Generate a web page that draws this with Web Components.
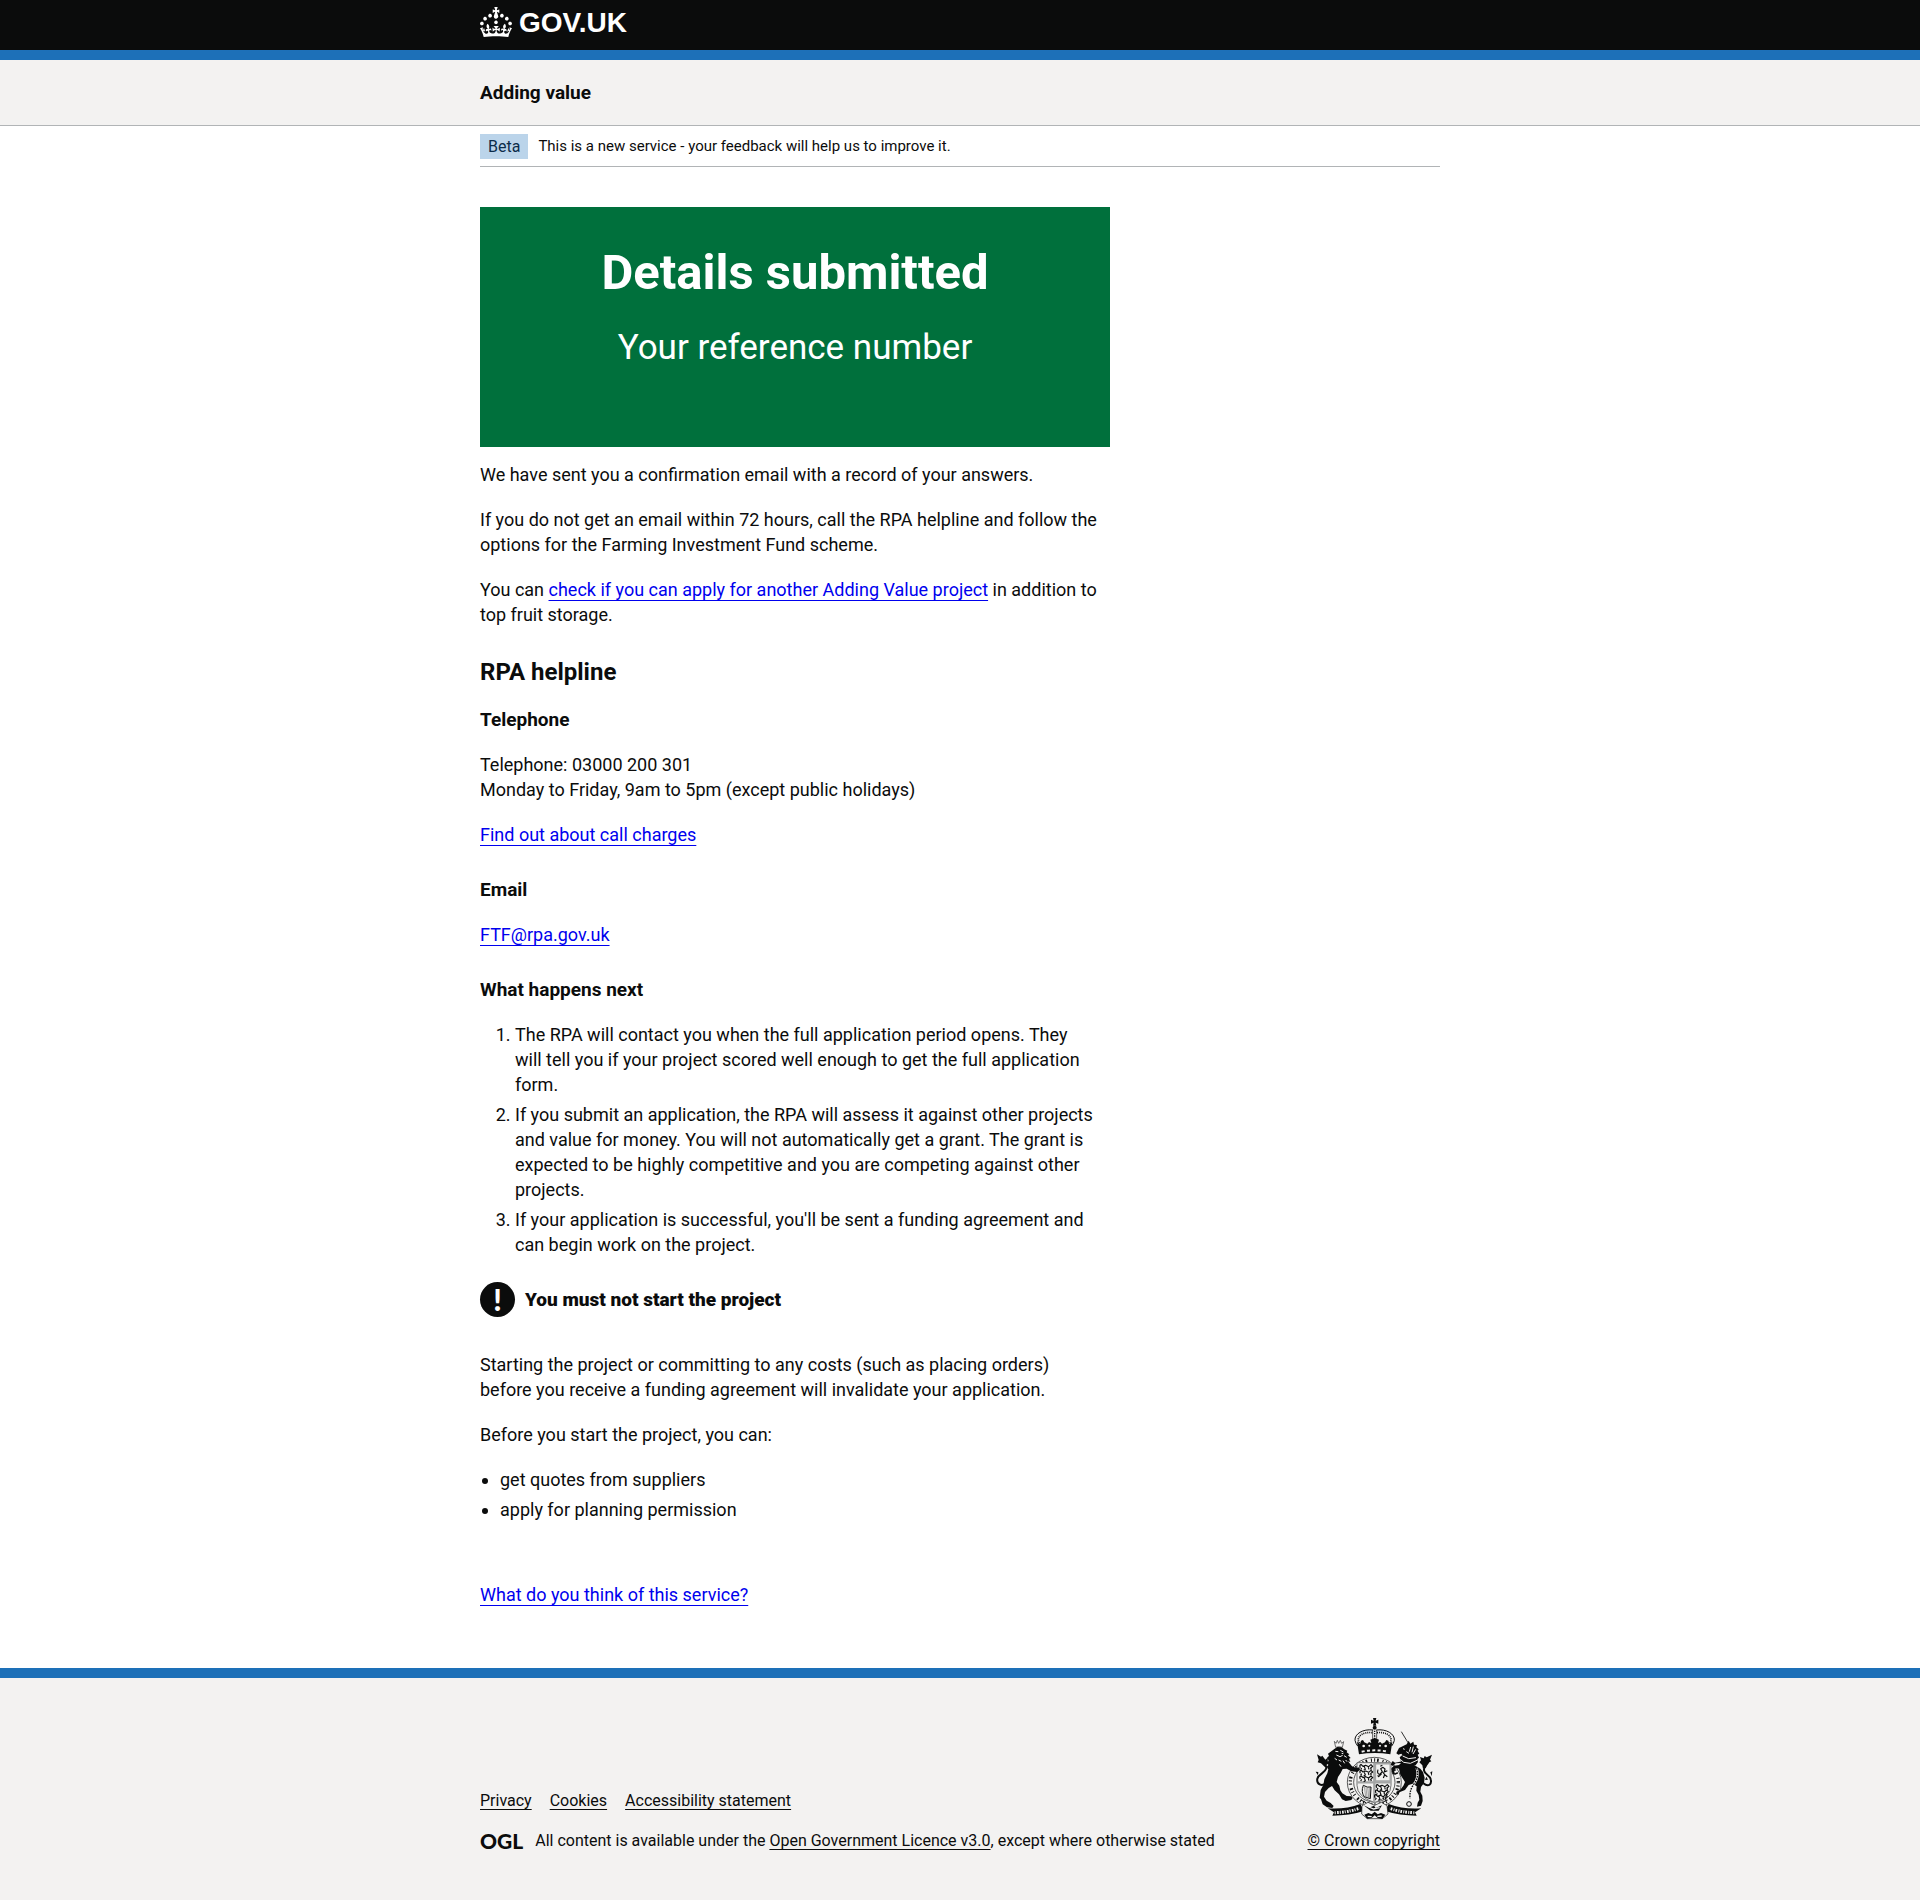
<!DOCTYPE html>
<html lang="en">
<head>
<meta charset="utf-8">
<meta name="viewport" content="width=device-width, initial-scale=1">
<title>Details submitted - Adding value</title>
<style>
  html { background: #f3f2f1; }
  body {
    margin: 0;
    background: #fff;
    color: #0b0c0c;
    font: 400 18px/25px Roboto, "Liberation Sans", sans-serif;
    --brand: #1d70b8;
    --black: #0b0c0c;
    --grey: #f3f2f1;
    --border: #b1b4b6;
    --page-width: 960px;
  }
</style>
</head>
<body>
<site-header></site-header>
<service-bar>Adding value</service-bar>
<phase-banner tag="Beta">This is a new service - your feedback will help us to improve it.</phase-banner>
<page-content></page-content>
<site-footer></site-footer>

<script>
const BASE = `
  :host { display: block; }
  *, *::before { box-sizing: border-box; }
  .wrap { max-width: var(--page-width); margin: 0 auto; }
`;

function define(name, styles, markup) {
  const template = document.createElement('template');
  template.innerHTML = `<style>${BASE}${styles}</style>${markup}`;
  customElements.define(name, class extends HTMLElement {
    constructor() {
      super();
      this.attachShadow({ mode: 'open' }).append(template.content.cloneNode(true));
    }
    connectedCallback() {
      for (const node of this.shadowRoot.querySelectorAll('[data-text]')) {
        node.textContent = this.getAttribute(node.dataset.text) || '';
      }
      const link = this.shadowRoot.querySelector('a[data-href]');
      if (link) link.href = this.getAttribute('href') || '#';
    }
  });
}

define('text-link', `
  :host { display: inline; }
  a { color: #0000ee; text-decoration: underline; text-decoration-thickness: 1px; text-underline-offset: 4px; text-decoration-skip-ink: none; }
  :host([muted]) a { color: var(--black); text-underline-offset: 3px; text-decoration-skip-ink: auto; }
`, `<a data-href><slot></slot></a>`);

define('crown-icon', `
  :host { display: block; width: 32px; height: 30px; }
  svg { display: block; fill: currentColor; }
`, `<svg width="32" height="30" viewBox="0 0 32 30" aria-hidden="true"><path d="M22.6 10.4c-1 .4-2-.1-2.4-1-.4-.9.1-2 1-2.4.9-.4 2 .1 2.4 1s-.1 2-1 2.4m-5.9 6.7c-.9.4-2-.1-2.4-1-.4-.9.1-2 1-2.4.9-.4 2 .1 2.4 1s-.1 2-1 2.4m10.8-3.7c-1 .4-2-.1-2.4-1-.4-.9.1-2 1-2.4.9-.4 2 .1 2.4 1s0 2-1 2.4m3.3 4.8c-1 .4-2-.1-2.4-1-.4-.9.1-2 1-2.4.9-.4 2 .1 2.4 1s-.1 2-1 2.4M17 4.7l2.3 1.2V2.5l-2.3.7-.2-.2.9-3h-3.4l.9 3-.2.2c-.1.1-2.3-.7-2.3-.7v3.4L15 4.7c.1.1.1.2.2.2l-1.3 4c-.1.2-.1.4-.1.6 0 1.1.8 2 1.9 2.2h.7c1-.2 1.9-1.1 1.9-2.1 0-.2 0-.4-.1-.6l-1.3-4c-.1-.2 0-.2.1-.3m-7.6 5.7c.9.4 2-.1 2.4-1 .4-.9-.1-2-1-2.4-.9-.4-2 .1-2.4 1s0 2 1 2.4m-5 3c.9.4 2-.1 2.4-1 .4-.9-.1-2-1-2.4-.9-.4-2 .1-2.4 1s.1 2 1 2.4m-3.2 4.8c.9.4 2-.1 2.4-1 .4-.9-.1-2-1-2.4-.9-.4-2 .1-2.4 1s0 2 1 2.4m14.8 11c4.4 0 8.6.3 12.3.8 1.1-4.5 2.4-7 3.7-8.8l-2.5-.9c.2 1.3.3 1.9 0 2.7-.4-.4-.8-1.1-1.1-2.3l-1.2 4c.7-.5 1.3-.8 2-.9-1.1 2.5-2.6 3.1-3.5 3-1.1-.2-1.7-1.2-1.5-2.1.3-1.2 1.5-1.5 2.1-.1 1.1-2.3-.8-3-2-2.3 1.9-1.9 2.1-3.5.6-5.6-2.1 1.6-2.1 3.2-1.2 5.5-1.2-1.4-3.2-.6-2.5 1.6.9-1.4 2.1-.5 1.9.8-.2 1.1-1.7 2.1-3.5 1.9-2.7-.2-2.9-2.1-2.9-3.6.7-.1 1.9.5 2.9 1.9l.4-4.3c-1.1 1.1-2.1 1.4-3.2 1.4.4-1.2 2.1-3 2.1-3h-5.4s1.7 1.9 2.1 3c-1.1 0-2.1-.2-3.2-1.4l.4 4.3c1-1.4 2.2-2 2.9-1.9-.1 1.5-.2 3.4-2.9 3.6-1.9.2-3.4-.8-3.5-1.9-.2-1.3 1-2.2 1.9-.8.7-2.3-1.2-3-2.5-1.6.9-2.2.9-3.9-1.2-5.5-1.5 2-1.3 3.7.6 5.6-1.2-.7-3.1 0-2 2.3.6-1.4 1.8-1.1 2.1.1.2.9-.3 1.9-1.5 2.1-.9.2-2.4-.5-3.5-3 .6 0 1.2.3 2 .9l-1.2-4c-.3 1.1-.7 1.9-1.1 2.3-.3-.8-.2-1.4 0-2.7l-2.9.9C1.3 23 2.6 25.5 3.7 30c3.7-.5 7.9-.8 12.3-.8"/></svg>`);

define('royal-arms', `
  :host { display: block; width: 125px; height: 102px; }
  svg { display: block; }
`, `<svg width="125" height="102" viewBox="66 54 375 306" fill="#0b0c0c" aria-hidden="true">
  <!-- crown -->
  <path d="M252 54h10l-2 8 8-3v12l-8-3 2 9h-10l2-9-8 3V59l8 3z"/>
  <circle cx="257" cy="83" r="6"/>
  <path d="M252 90C222 86 196 102 198 121q2 10 8 17M262 90c30-4 56 12 54 31q-2 10-8 17" fill="none" stroke="#0b0c0c" stroke-width="3"/>
  <path d="M250 98c-24-3-44 8-42 24l4 10M264 98c24-3 44 8 42 24l-4 10" fill="none" stroke="#0b0c0c" stroke-width="5" stroke-dasharray="3 3"/>
  <path d="M251 90v30M263 90v30" stroke="#0b0c0c" stroke-width="2"/>
  <path d="M257 92v26" stroke="#0b0c0c" stroke-width="4" stroke-dasharray="4 3"/>
  <path d="M204 125l9 7 3-10 6-2 4 7 9 4 5-5 7 3-3-10 13-5 13 5-3 10 7-3 5 5 9-4 4-7 6 2 3 10 9-7-6 38q-47-8-94 0z"/>
  <g fill="#f3f2f1"><circle cx="224" cy="138" r="4"/><circle cx="290" cy="138" r="4"/><circle cx="241" cy="137" r="3"/><circle cx="273" cy="137" r="3"/></g>
  <path d="M218 155q39-8 78 0" fill="none" stroke="#f3f2f1" stroke-width="6" stroke-dasharray="9 7"/>
  <!-- garter and its motto -->
  <ellipse cx="256" cy="247" rx="82" ry="76" fill="#f3f2f1"/>
  <ellipse cx="256" cy="247" rx="81" ry="75" fill="none" stroke="#0b0c0c" stroke-width="2"/>
  <ellipse cx="256" cy="247" rx="62" ry="59" fill="none" stroke="#0b0c0c" stroke-width="2"/>
  <ellipse cx="256" cy="247" rx="72" ry="67" fill="none" stroke="#0b0c0c" stroke-width="10" stroke-dasharray="3 7 3 6 5 11"/>
  <path d="M216 300q18 6 24 20M296 300q-14 2-28 24" fill="none" stroke="#0b0c0c" stroke-width="3"/>
  <!-- shield -->
  <path d="M204 188h102v68q0 34-49 52-53-18-53-52z" fill="#f3f2f1" stroke="#6f7070" stroke-width="3"/>
  <path d="M204 247h102M256 188v118" stroke="#a4a5a5" stroke-width="7"/>
  <path d="M259 191h45v52h-45z" fill="none" stroke="#a4a5a5" stroke-width="5"/>
  <g fill="none" stroke="#0b0c0c" stroke-width="3.5" stroke-linejoin="round">
    <path id="beast" d="M214 203q-4-9 3-9l5 5 8-3 9 4 7-6 5 5-6 5 2 5M218 204l-3 5M226 200l3 8-5 3M238 202l2 6"/>
    <use href="#beast" y="17"/><use href="#beast" y="34"/>
    <use href="#beast" x="49" y="60"/><use href="#beast" x="47" y="76"/><use href="#beast" x="44" y="90"/>
    <path d="M267 209q-4 12 5 14l8-8-5-9 7-4 6 5-2 9 9-4M281 216l6 8-4 10M278 221l-9 9-3-4M287 224l8 6M274 199l6-3"/>
  </g>
  <path d="M223 256q-8 20 3 34l18 6 2-35q-11 3-23-5z" fill="none" stroke="#0b0c0c" stroke-width="3"/>
  <path d="M226 260l4 30M231 262l3 29M236 263l3 30M241 263v31" stroke="#777" stroke-width="2"/>
  <!-- lion -->
  <path d="M136 124l5 6 4-9 4 9 5-9 4 9 6-5-4 17q-9-4-20 0z" fill="none" stroke="#555" stroke-width="2.5"/>
  <path d="M137 146l8-5 13 1 8 6 9 4-2 5 8 6-4 3 8 8-5 2 4 10-7-2 12 15 13 5 9-2 2 7-8 7-18-2-14-8-12 1-6 12-8 12-4 15 8 11 3 14 6 9 13 8 14 1 4 5-4 6-17 3-11-5-9-15-13-12-8-13-10 6-11 12-3 14 8 12 12 7 9 9-4 6-16-2-13-9-5-15-4-5 3-23 8-15 3-17 9-18 3-12-5-8 5-5-4-9 5-3-4-11 5-4-3-7z"/>
  <path d="M139 154l9 1M154 151l9 5M142 165l11 5 8-4M137 175l7 5M149 180l8 4M165 167l8 5M162 182l5 8M151 193l5 7M158 160l5 1M170 180l4 5" stroke="#f3f2f1" stroke-width="3"/>
  <path d="M112 248c-14 14-30 4-27-12 3-14 23-16 27-31 1-10-8-15-16-22" fill="none" stroke="#0b0c0c" stroke-width="6"/>
  <path d="M107 200l-11-10-10-3 3-7-5-17 12 7 4-3 9 12 8-7-1 12 4 6-7 4-1 8zM88 216l-8-1 7 11z"/>
  <!-- unicorn -->
  <path d="M337 95l20 33" stroke="#0b0c0c" stroke-width="2.5"/>
  <path d="M353 133l6-11 5 9 9-6 2 9 9 1-2 7 7 6-3 4 5 9-5 3 4 9-5 4 2 9-7 10-30 1-14-13-4-12 8-7-3-4-9 3-6-4 8-16z"/>
  <path d="M318 188l26-5 16 5 14 6 20 12 8 10 5 17-2 16-9 12-2 14 6 12 1 16-5 14-12 3 2-12 5-9-2-14-7-13 1-13-12-8-12 4-11 15-17 7-2 7-7-1v-8l12-6 9-12 5-11-14-22-4-18-9-2-6 9 4 11-8-1-4-16 8-10 15-2 6-6-16 1-8 8-7-4 6-11z"/>
  <path d="M334 178l10 9 20 3 22-10" fill="none" stroke="#f3f2f1" stroke-width="3"/>
  <path d="M342 146l5 2M352 155l8 5M365 141l-4 14M373 140l-4 17M380 148l-8 14M341 168l18 8 22-3" stroke="#f3f2f1" stroke-width="3"/>
  <path d="M383 204q8 27-8 48-14 17-12 44" fill="none" stroke="#f3f2f1" stroke-width="7"/>
  <path d="M383 204q8 27-8 48-14 17-12 44" fill="none" stroke="#0b0c0c" stroke-width="4" stroke-dasharray="5 3"/>
  <circle cx="360" cy="312" r="7" fill="none" stroke="#0b0c0c" stroke-width="3"/>
  <path d="M403 250c16 13 26 2 22-12-3-14-18-14-20-27-2-11 10-16 13-26" fill="none" stroke="#0b0c0c" stroke-width="6"/>
  <path d="M402 206l-2-10-9-9 5-6-3-10 11 4 3-7 6 4 16-8-6 15 4 5-12 6-4 13zM424 217l6-3-2 15zM408 240l4-10 5 9z"/>
  <!-- scroll -->
  <path d="M116 325q53 4 98-13l11 21q-44 14-95 14l5-10zM397 325q-53 4-98-13l-11 21q44 14 95 14l-5-10z"/>
  <path d="M137 338q40-1 74-13M376 338q-40-1-74-13" fill="none" stroke="#f3f2f1" stroke-width="9" stroke-dasharray="3 4 5 3"/>
  <path d="M219 317l18-10 20 9 20-9 17 10 3 25-17 14h-45l-17-14z" fill="#f3f2f1" stroke="#0b0c0c" stroke-width="2"/>
  <path d="M226 344l12-5 10 4 9-8 9 8 10-4 13 5-9 13-14-3-9-8-9 8-14 2zM224 316l16 7 15-6 5 7 19-8-10 16H245z"/>
  <path d="M239 321l15 6 18-4M236 349l12 1M265 349l13-1" fill="none" stroke="#f3f2f1" stroke-width="4"/>
</svg>`);

define('site-header', `
  :host { background: var(--black); border-bottom: 10px solid var(--brand); }
  .wrap { height: 50px; padding-top: 7px; }
  a { display: inline-flex; gap: 7px; color: #fff; text-decoration: none; }
  span { font: 700 28px/32px "Liberation Sans", sans-serif; }
`, `<header class="wrap"><a href="#" aria-label="GOV.UK"><crown-icon></crown-icon><span>GOV.UK</span></a></header>`);

define('service-bar', `
  :host { background: var(--grey); border-bottom: 1px solid var(--border); }
  .wrap { padding: 20px 0; font-size: 19px; font-weight: 700; }
`, `<div class="wrap"><slot></slot></div>`);

define('phase-banner', `
  .wrap { display: flex; gap: 10px; padding: 8px 0 7px; border-bottom: 1px solid var(--border); font-size: 15px; align-items: center; }
  strong { font-size: 16px; font-weight: 400; line-height: 25px; padding: 0 8px; background: #bbd4ea; color: #0c2d4a; }
`, `<div class="wrap"><strong data-text="tag"></strong><span><slot></slot></span></div>`);

define('result-panel', `
  :host { background: #00703c; color: #fff; text-align: center; padding: 41px 40px 39px; }
  h1 { margin: 0 0 30px; font-size: 49px; line-height: 50px; font-weight: 700; }
  div { font-size: 35px; line-height: 40px; min-height: 80px; }
`, `<h1 data-text="heading"></h1><div><slot></slot></div>`);

define('warning-text', `
  :host { display: flex; align-items: center; gap: 10px; font-size: 19px; font-weight: 700; margin: 0 0 35px; }
  .icon { flex: none; width: 35px; height: 35px; border-radius: 50%; background: var(--black); color: #fff; font: 900 30px/34px Lato, sans-serif; text-align: center; }
`, `<span class="icon" aria-hidden="true">!</span><strong><slot></slot></strong>`);

define('page-content', `
  .wrap { padding: 40px 0 61px; }
  .column { max-width: 630px; }
  result-panel { margin-bottom: 15px; }
  p { margin: 0 0 20px; }
  h2, h3 { margin: 0 0 20px; padding-top: 10px; font-weight: 700; }
  h2 { font-size: 24px; line-height: 30px; }
  h3 { font-size: 19px; line-height: 25px; }
  h2 + h3 { padding-top: 0; }
  ol, ul { margin: 0 0 25px; padding-left: 35px; }
  ul { padding-left: 20px; margin-bottom: 60px; }
  li + li { margin-top: 5px; }
  .last { margin: 0; }
`, `<main class="wrap"><div class="column">
  <result-panel heading="Details submitted">Your reference number</result-panel>
  <p>We have sent you a confirmation email with a record of your answers.</p>
  <p>If you do not get an email within 72 hours, call the RPA helpline and follow the options for the Farming Investment Fund scheme.</p>
  <p>You can <text-link>check if you can apply for another Adding Value project</text-link> in addition to top fruit storage.</p>
  <h2>RPA helpline</h2>
  <h3>Telephone</h3>
  <p>Telephone: 03000 200 301<br>Monday to Friday, 9am to 5pm (except public holidays)</p>
  <p><text-link>Find out about call charges</text-link></p>
  <h3>Email</h3>
  <p><text-link href="mailto:FTF@rpa.gov.uk">FTF@rpa.gov.uk</text-link></p>
  <h3>What happens next</h3>
  <ol>
    <li>The RPA will contact you when the full application period opens. They<br>will tell you if your project scored well enough to get the full application form.</li>
    <li>If you submit an application, the RPA will assess it against other projects and value for money. You will not automatically get a grant. The grant is expected to be highly competitive and you are competing against other projects.</li>
    <li>If your application is successful, you'll be sent a funding agreement and can begin work on the project.</li>
  </ol>
  <warning-text>You must not start the project</warning-text>
  <p>Starting the project or committing to any costs (such as placing orders)<br>before you receive a funding agreement will invalidate your application.</p>
  <p>Before you start the project, you can:</p>
  <ul>
    <li>get quotes from suppliers</li>
    <li>apply for planning permission</li>
  </ul>
  <p class="last"><text-link>What do you think of this service?</text-link></p>
</div></main>`);

define('site-footer', `
  :host { background: var(--grey); border-top: 10px solid var(--brand); font-size: 16px; line-height: 20px; }
  .wrap { display: flex; justify-content: space-between; align-items: flex-end; padding: 40px 0 49px; }
  nav { display: flex; gap: 18px; margin-bottom: 20px; }
  .licence { display: flex; align-items: center; gap: 12px; }
  .ogl { font: 900 21px/20px Lato, sans-serif; }
  .copyright { display: flex; flex-direction: column; align-items: center; gap: 11px; }
`, `<footer class="wrap">
  <div>
    <nav aria-label="Support links">
      <text-link muted>Privacy</text-link><text-link muted>Cookies</text-link><text-link muted>Accessibility statement</text-link>
    </nav>
    <div class="licence"><span class="ogl">OGL</span><span>All content is available under the <text-link muted>Open Government Licence v3.0</text-link>, except where otherwise stated</span></div>
  </div>
  <div class="copyright"><royal-arms></royal-arms><text-link muted>© Crown copyright</text-link></div>
</footer>`);
</script>
</body>
</html>
